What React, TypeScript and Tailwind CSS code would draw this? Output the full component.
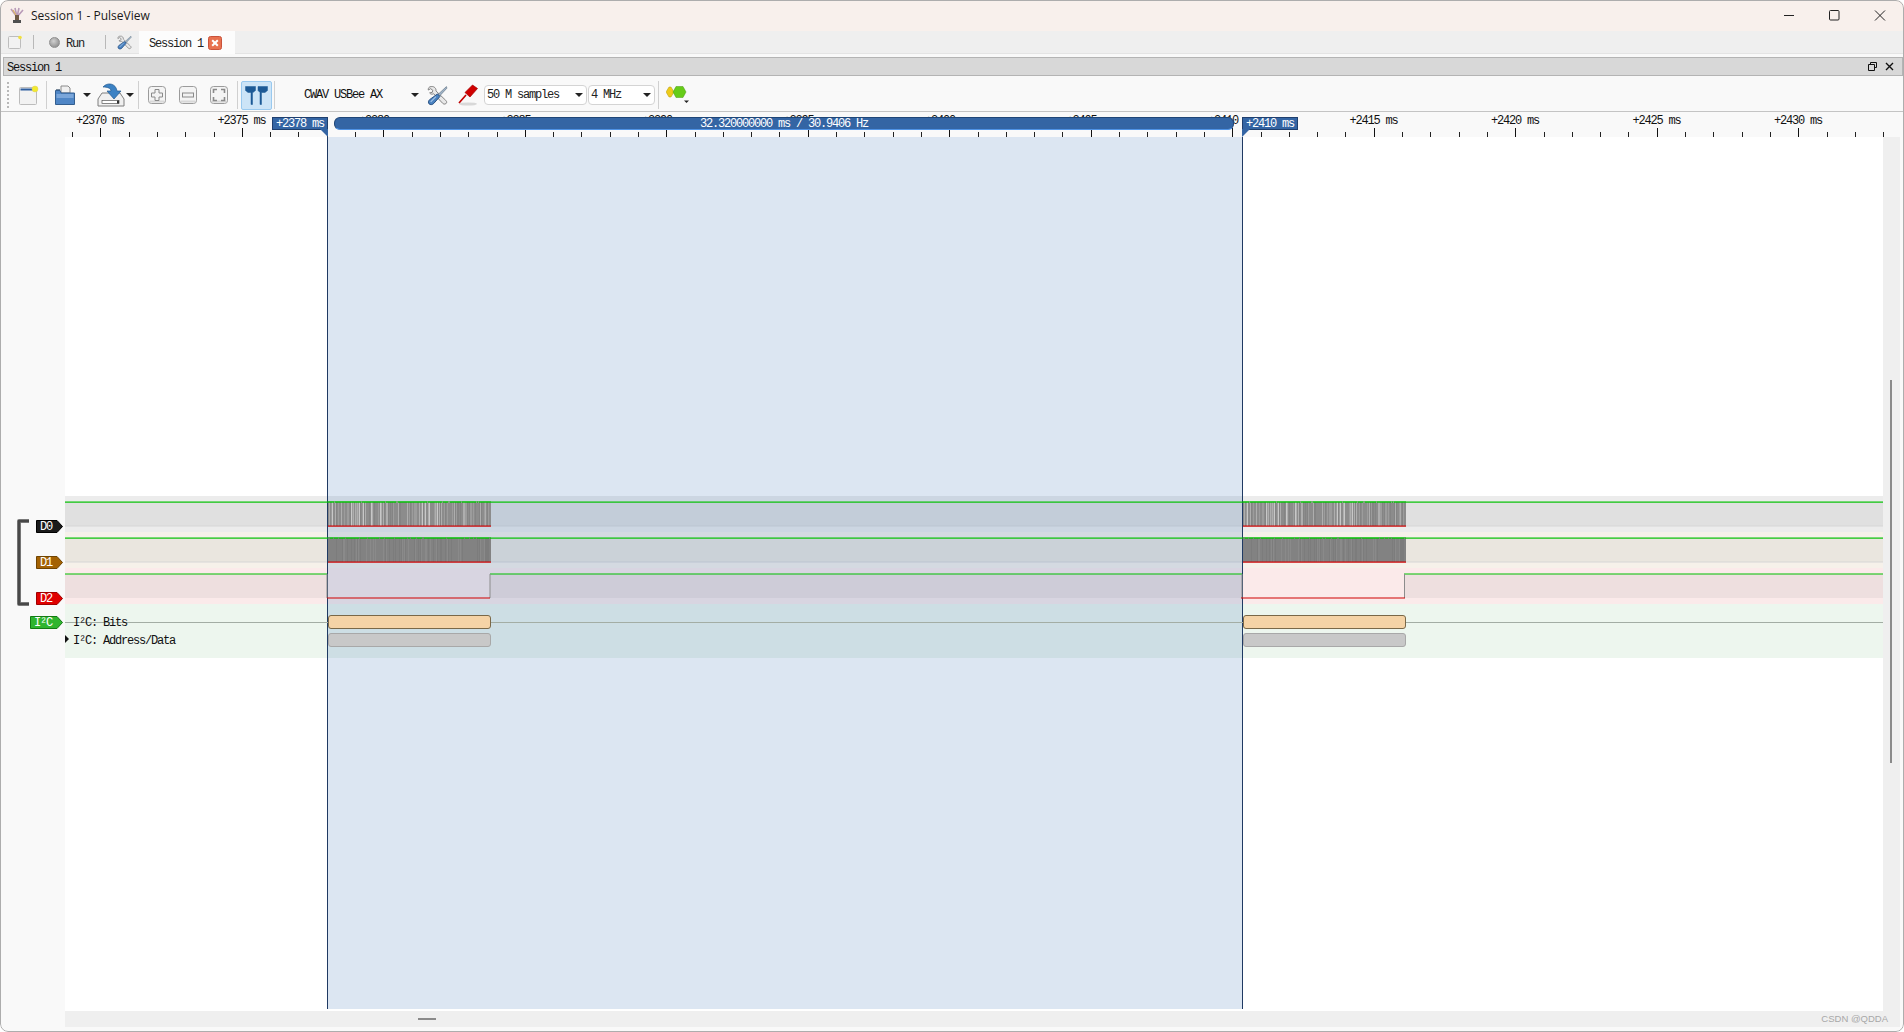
import React from "react";

const mono = "[font-family:'Liberation_Mono',monospace] text-[12px] tracking-[-1.2px] leading-none";

function stripes(seed: number, n: number) {
  const out: number[] = [];
  let s = seed;
  for (let i = 0; i < n; i++) {
    s = (s * 1103515245 + 12345) & 0x7fffffff;
    out.push((s >> 8) % 100);
  }
  return out;
}
const pat0 = stripes(7, 163);
const pat1 = stripes(19, 163);

function Busy({ x, kind }: { x: number; kind: 0 | 1 }) {
  const pat = kind === 0 ? pat0 : pat1;
  return (
    <g>
      <rect x={x} y={6} width={163} height={24} fill={kind === 0 ? "#8c8c8c" : "#828282"} />
      {pat.map((v, i) => {
        if (kind === 0) {
          if (v > 55) return null;
          const c = v < 6 ? "#c8c8c8" : v < 20 ? "#aeaeae" : v < 40 ? "#9c9c9c" : "#848484";
          return <rect key={i} x={x + i} y={6} width={1} height={24} fill={c} />;
        }
        if (v > 30) return null;
        return <rect key={i} x={x + i} y={6} width={1} height={24} fill={v < 12 ? "#8a8a8a" : "#7c7c7c"} />;
      })}
      <rect x={x} y={5.5} width={163} height={1.2} fill="#00c000" />
      <rect x={x} y={29.5} width={163} height={1.2} fill="#d00000" />
      {pat.map((v, i) =>
        v > 90 ? <rect key={i} x={x + i} y={5.5} width={1} height={1.2} fill={kind === 0 ? "#a0a0a0" : "#808080"} /> : null
      )}
    </g>
  );
}

function LogicBg({ outer, inner, low }: { outer: string; inner: string; low?: boolean }) {
  const W = 1818;
  return (
    <svg className="block h-[36px] w-[1818px] shrink-0" viewBox={`0 0 ${W} 36`}>
      <rect width={W} height={36} fill={outer} />
      {low ? (
        <g>
          <rect y={6} width={262} height={24} fill={inner} />
          <rect x={425} y={6} width={753} height={24} fill={inner} />
          <rect x={1340} y={6} width={478} height={24} fill={inner} />
        </g>
      ) : (
        <g>
          <rect y={6} width={W} height={24} fill={inner} />
          <rect y={29.5} width={W} height={1} fill="#d6d6d6" />
        </g>
      )}
    </svg>
  );
}

function LogicTrace({ busy }: { busy?: 0 | 1 }) {
  const W = 1818;
  return (
    <svg className="block h-[36px] w-[1818px] shrink-0" viewBox={`0 0 ${W} 36`}>
      {busy !== undefined ? (
        <g>
          <rect y={5.5} width={W} height={1.2} fill="#00c000" />
          <Busy x={263} kind={busy} />
          <Busy x={1178} kind={busy} />
        </g>
      ) : (
        <g>
          <path d="M0 6H262M425 6H1177M1339 6H1818" stroke="#00c000" strokeWidth={1.2} fill="none" />
          <path d="M262 6V30M425 6V30M1177 6V30M1339.5 6V30" stroke="#8c8c8c" strokeWidth={1} fill="none" />
          <path d="M262 30H425M1176 30H1340" stroke="#d00000" strokeWidth={1.2} fill="none" />
        </g>
      )}
    </svg>
  );
}

function Pill({ left, top, kind }: { left: number; top: number; kind: "o" | "g" }) {
  return (
    <div
      className={
        kind === "o"
          ? "absolute h-[14px] w-[163px] rounded-[3px] border border-[#7a6848] bg-[#f5d3a6]"
          : "absolute h-[14px] w-[163px] rounded-[3px] border border-[#a8a8a8] bg-[#c8c8c8]"
      }
      style={{ left, top }}
    />
  );
}

function Tag({ text, fill, stroke, wide }: { text: string; fill: string; stroke: string; wide?: boolean }) {
  const w = wide ? 33 : 27;
  return (
    <div className="relative flex h-[13px] items-center justify-start" style={{ width: w }}>
      <svg className="absolute inset-0" width={w} height={13} viewBox={`0 0 ${w} 13`}>
        <path d={`M0.5 0.5H${w - 6}L${w - 0.5} 6.5L${w - 6} 12.5H0.5Z`} fill={fill} stroke={stroke} />
      </svg>
      <span className={`${mono} relative pl-[4px] text-white`}>{text}</span>
    </div>
  );
}

function ToolIcon({ size = 20 }: { size?: number }) {
  return (
    <svg width={size} height={size} viewBox="0 0 20 20" className="shrink-0">
      <path d="M4 1.5C2 1.5 1 3 1.2 4.8L3.5 3.5L5.5 5L5 7L2.5 7.5C3.5 9 5.3 9 6.3 8.3L15 17.5C16 18.5 18 18.5 18.6 17C19 16 18.5 15.2 17.8 14.6L8.5 5.6C9 3.5 7 1 4 1.5Z" fill="#e8e8e8" stroke="#7d7d7d" strokeWidth={0.9} />
      <path d="M18.5 1.5L19 3L12 10.5L10.5 9Z" fill="#9fb4c8" stroke="#5f6f7f" strokeWidth={0.6} />
      <path d="M10 8.5L12.3 11L6.5 17.5C5.2 19 3 19 2 18C1 17 1.2 15.2 2.4 14Z" fill="#4a82c0" stroke="#274f80" strokeWidth={0.9} />
      <path d="M3.5 16L8.5 11" stroke="#a9c9ea" strokeWidth={1} />
    </svg>
  );
}

function SmallArrow() {
  return (
    <svg width={8} height={4} viewBox="0 0 8 4" className="shrink-0">
      <path d="M0 0H8L4 4Z" fill="#222" />
    </svg>
  );
}

function Sep() {
  return <div className="h-[28px] w-px shrink-0 bg-[#d0d0d0]" />;
}

function ZoomBtn({ kind }: { kind: "plus" | "minus" | "fit" }) {
  return (
    <svg width={18} height={18} viewBox="0 0 18 18" className="shrink-0">
      <rect x={0.5} y={0.5} width={17} height={17} rx={3} fill="#f4f4f4" stroke="#9b9b9b" />
      <rect x={1.5} y={14.5} width={15} height={2} fill="#d8d8d8" />
      {kind === "plus" && <path d="M7 3.5H11V7H14.5V11H11V14.5H7V11H3.5V7H7Z" fill="#f2f2f2" stroke="#8a8a8a" />}
      {kind === "minus" && <rect x={3.5} y={7} width={11} height={4} fill="#f2f2f2" stroke="#8a8a8a" />}
      {kind === "fit" && (
        <path d="M3.5 7V3.5H7M11 3.5H14.5V7M14.5 11V14.5H11M7 14.5H3.5V11" fill="none" stroke="#8a8a8a" strokeWidth={1.6} />
      )}
    </svg>
  );
}

function Combo({ text, width }: { text: string; width: number }) {
  return (
    <div
      className="flex h-[20px] shrink-0 items-center justify-between rounded-[4px] border border-[#d4d4d4] bg-white pl-[2px] pr-[3px]"
      style={{ width }}
    >
      <span className={`${mono} text-[#222]`}>{text}</span>
      <SmallArrow />
    </div>
  );
}

function Flag({ left, text, side }: { left: number; text: string; side: "left" | "right" }) {
  return (
    <>
      <div className="absolute top-[5px] flex h-[13px] w-[56px] items-center justify-center border border-[#1f3f6e] bg-[#3465a4]" style={{ left }}>
        <span className={`${mono} text-white`}>{text}</span>
      </div>
      <svg className="absolute top-[17px]" width={8} height={8} viewBox="0 0 8 8" style={{ left: side === "right" ? left + 48 : left }}>
        {side === "right" ? <path d="M0 0H8V8Z" fill="#3465a4" /> : <path d="M0 0H8L0 8Z" fill="#3465a4" />}
      </svg>
    </>
  );
}

function Ruler() {
  const minors: number[] = [];
  for (let x = 72; x < 1884; x += 28.3) minors.push(x);
  const labels: number[] = [];
  for (let k = 0; k <= 12; k++) labels.push(k);
  return (
    <div className="relative h-[25px] w-full shrink-0 bg-[#f9f9f9]">
      <svg className="absolute inset-0" width={1904} height={25} viewBox="0 0 1904 25">
        {minors.map((x) => (
          <line key={x} x1={Math.round(x) + 0.5} x2={Math.round(x) + 0.5} y1={20} y2={25} stroke="#222" />
        ))}
        {labels.map((k) => {
          const x = 100 + 141.5 * k;
          return (
            <g key={k}>
              <line x1={Math.round(x) + 0.5} x2={Math.round(x) + 0.5} y1={16} y2={25} stroke="#111" />
              <text
                x={x}
                y={12}
                textAnchor="middle"
                fontFamily="'Liberation Mono', monospace"
                fontSize={12}
                letterSpacing={-1.2}
                fill="#111"
              >
                {`+${2370 + 5 * k} ms`}
              </text>
            </g>
          );
        })}
      </svg>
      <Flag left={272} text="+2378 ms" side="right" />
      <Flag left={1242} text="+2410 ms" side="left" />
      <div className="absolute left-[334px] top-[5px] flex h-[13px] w-[900px] items-center justify-center rounded-[6px] border border-[#1f4677] border-b-[#4f93e6] bg-[#3465a4]">
        <span className={`${mono} text-white`}>32.320000000 ms / 30.9406 Hz</span>
      </div>
    </div>
  );
}

export default function App() {
  return (
    <div className="relative flex h-[1032px] w-[1904px] flex-col overflow-hidden rounded-[8px] bg-[#f9f9f9]">
      {/* title bar */}
      <div className="flex h-[31px] shrink-0 items-center bg-[#f8f0ec]">
        <svg width={16} height={17} viewBox="0 0 16 17" className="ml-[9px] shrink-0">
          <path d="M8 10L2 2M8 10L6 1M8 10L10 1M8 10L14 3" stroke="#b89ab8" strokeWidth={1.6} />
          <path d="M8 10L4 3" stroke="#d9b36a" strokeWidth={1.4} />
          <rect x={6} y={8} width={4} height={5} fill="#6f5a44" />
          <rect x={4} y={13} width={8} height={3} fill="#4f4f4f" />
        </svg>
        <span className="ml-[6px] text-[12px] text-[#1a1a1a] [font-family:'Open_Sans',sans-serif]">Session 1 - PulseView</span>
        <div className="ml-auto flex h-full items-center">
          <svg width={46} height={31} viewBox="0 0 46 31"><path d="M20 15.5H30" stroke="#222" /></svg>
          <svg width={46} height={31} viewBox="0 0 46 31"><rect x={19.5} y={10.5} width={9.5} height={9.5} rx={1} fill="none" stroke="#222" /></svg>
          <svg width={46} height={31} viewBox="0 0 46 31"><path d="M19 10.5L29 20.5M29 10.5L19 20.5" stroke="#222" /></svg>
          <div className="w-[2px]" />
        </div>
      </div>

      {/* tab bar */}
      <div className="flex h-[23px] shrink-0 items-center border-b border-[#e4e4e4] bg-[#efefef]">
        <svg width={14} height={14} viewBox="0 0 14 14" className="ml-[8px] shrink-0">
          <rect x={0.5} y={1.5} width={12} height={12} rx={1} fill="#f2f2f2" stroke="#bdbdbd" />
          <circle cx={12} cy={2.5} r={1.8} fill="#f0e040" />
        </svg>
        <div className="ml-[11px] h-[14px] w-px bg-[#b8b8b8]" />
        <div className="ml-[15px] h-[11px] w-[11px] rounded-full border border-[#8f8f8f] bg-[radial-gradient(circle_at_40%_35%,#d0d0d0,#808080)]" />
        <span className={`${mono} ml-[6px] mt-[3px] text-[#222]`}>Run</span>
        <div className="ml-[21px] h-[14px] w-px bg-[#b8b8b8]" />
        <div className="ml-[11px]"><ToolIcon size={15} /></div>
        <div className="ml-[7px] flex h-[23px] w-[96px] items-center bg-[#fcfcfc] pl-[10px]">
          <span className={`${mono} mt-[3px] text-[#222]`}>Session 1</span>
          <svg width={14} height={14} viewBox="0 0 14 14" className="ml-[5px] mt-px">
            <rect x={0.5} y={0.5} width={13} height={13} rx={2} fill="#e8714f" stroke="#c9523a" />
            <path d="M4.2 4.2L9.8 9.8M9.8 4.2L4.2 9.8" stroke="#fff" strokeWidth={2} />
          </svg>
        </div>
      </div>

      {/* dock title */}
      <div className="mt-[3px] ml-[3px] mr-px flex h-[19px] shrink-0 items-center border border-[#b4b4b4] bg-[#d8d8d8] pl-[3px]">
        <span className={`${mono} mt-[2px] text-[#111]`}>Session 1</span>
        <svg width={9} height={9} viewBox="0 0 9 9" className="ml-auto shrink-0">
          <path d="M2.5 2.5V0.5H8.5V5.5H6.5M0.5 2.5H6.5V8.5H0.5Z" fill="none" stroke="#111" />
        </svg>
        <svg width={9} height={9} viewBox="0 0 9 9" className="ml-[8px] mr-[8px] shrink-0">
          <path d="M1 1L8 8M8 1L1 8" stroke="#111" strokeWidth={1.4} />
        </svg>
      </div>

      {/* toolbar */}
      <div className="flex h-[36px] shrink-0 items-center border-b border-[#c4c4c4] bg-[#f9f9f9] pt-[3px]">
        <div className="ml-[7px] h-[26px] w-[2px] border-l-2 border-dotted border-[#b8b8b8]" />
        <svg width={20} height={20} viewBox="0 0 20 20" className="ml-[10px] shrink-0">
          <rect x={0.5} y={2.5} width={17} height={17} rx={1} fill="#f2f2f2" stroke="#bcbcbc" />
          <rect x={1.5} y={3.5} width={14} height={2} fill="#2f5f9f" />
          <circle cx={16} cy={4} r={3} fill="#f2ea30" stroke="#e0d060" strokeWidth={0.5} />
        </svg>
        <div className="ml-[7px]"><Sep /></div>
        <svg width={20} height={20} viewBox="0 0 20 20" className="ml-[8px] shrink-0">
          <path d="M6 1H13L15 3V8H6Z" fill="#f0f0f0" stroke="#8a8a8a" />
          <path d="M1 4H5V6H1Z" fill="#7a8a9a" />
          <path d="M0.5 5.5H5L6 8H19.5V19.5H0.5Z" fill="#4f86c6" stroke="#345f90" />
          <rect x={1.5} y={9} width={17} height={4} fill="#7aa6da" />
        </svg>
        <div className="ml-[8px]"><SmallArrow /></div>
        <svg width={28} height={24} viewBox="0 0 28 24" className="ml-[6px] shrink-0">
          <path d="M5 10H23L27 16V23H1V16Z" fill="#f0f0f0" stroke="#7f7f7f" />
          <rect x={5} y={17.5} width={17} height={3} fill="#fff" stroke="#555" strokeWidth={0.7} />
          <rect x={20} y={17.5} width={2} height={3} fill="#333" />
          <path d="M6 4C10 -1 19 0 20 8H24L17 16L10 8H14C14 5 10 4 6 4Z" fill="#3c82c4" stroke="#225a90" strokeWidth={0.7} />
        </svg>
        <div className="ml-[1px]"><SmallArrow /></div>
        <div className="ml-[4px]"><Sep /></div>
        <div className="ml-[9px]"><ZoomBtn kind="plus" /></div>
        <div className="ml-[13px]"><ZoomBtn kind="minus" /></div>
        <div className="ml-[13px]"><ZoomBtn kind="fit" /></div>
        <div className="ml-[9px]"><Sep /></div>
        <div className="ml-[3px] flex h-[29px] w-[31px] items-center justify-center rounded-[2px] border border-[#99c9ef] bg-[#cce4f7]">
          <svg width={23} height={19} viewBox="0 0 23 19">
            <path d="M0.5 0.5H10.5V4.5L8 6.5H7.5V18.5H6V6.5H3L0.5 4.5ZM13 0.5H22.5V4.5L20 6.5H16.5V18.5H15V6.5L13 4.5Z" fill="#1d5a96" stroke="#1d5a96" strokeWidth={0.5} />
          </svg>
        </div>
        <div className="ml-[2px]"><Sep /></div>
        <span className={`${mono} ml-[29px] w-[78px] whitespace-nowrap text-[#111]`}>CWAV USBee AX</span>
        <div className="ml-[29px]"><SmallArrow /></div>
        <div className="ml-[8px]"><ToolIcon size={21} /></div>
        <svg width={21} height={22} viewBox="0 0 21 22" className="ml-[10px] shrink-0">
          <ellipse cx={10} cy={20} rx={9} ry={1.6} fill="#d8d8d8" />
          <path d="M1 19L8 11" stroke="#c00000" strokeWidth={1.6} />
          <path d="M7 8.5L14.5 1L19.5 4.5L12 13Z" fill="#d00000" stroke="#a00000" strokeWidth={0.7} />
        </svg>
        <div className="ml-[5px]"><Combo text="50 M samples" width={103} /></div>
        <div className="ml-px"><Combo text="4 MHz" width={67} /></div>
        <div className="ml-[3px]"><Sep /></div>
        <svg width={23} height={18} viewBox="0 0 23 18" className="ml-[7px] shrink-0">
          <path d="M0 6L3 1H5L8 6L5 11H3Z" fill="#eecb1a" stroke="#b59a10" strokeWidth={0.5} />
          <path d="M7 6L10 0.5H17L20 6L17 11.5H10Z" fill="#66cc18" stroke="#4a9a10" strokeWidth={0.5} />
          <path d="M18 14.5H23L20.5 17Z" fill="#222" />
        </svg>
      </div>

      <Ruler />

      {/* main */}
      <div className="flex min-h-0 flex-1">
        {/* label column */}
        <div className="relative flex w-[65px] shrink-0 flex-col bg-[#f9f9f9]">
          <div className="h-[359px] shrink-0" />
          <div className="flex h-[36px] items-end justify-end"><div className="relative top-px mr-[2px]"><Tag text="D0" fill="#1a1a1a" stroke="#000" /></div></div>
          <div className="flex h-[36px] items-end justify-end"><div className="relative top-px mr-[2px]"><Tag text="D1" fill="#a46203" stroke="#6f4402" /></div></div>
          <div className="flex h-[36px] items-end justify-end"><div className="relative top-px mr-[2px]"><Tag text="D2" fill="#e00000" stroke="#a00000" /></div></div>
          <div className="flex justify-end pt-[12px]"><div className="mr-[2px]"><Tag text="I²C" fill="#2fb52f" stroke="#137a13" wide /></div></div>
          <svg className="absolute left-[16px] top-[382px]" width={15} height={87} viewBox="0 0 15 87">
            <path d="M13 2H3V85H13" fill="none" stroke="#8a8a8a" strokeWidth={4} strokeLinejoin="round" />
            <path d="M13 2H3V85H13" fill="none" stroke="#484848" strokeWidth={2.6} strokeLinejoin="round" />
          </svg>
        </div>

        {/* centre */}
        <div className="flex w-[1835px] shrink-0 flex-col">
          <div className="flex h-[874px] shrink-0">
            <div className="relative h-full w-[1818px] shrink-0 overflow-hidden bg-white">
              {/* row backgrounds */}
              <div className="h-[359px]" />
              <LogicBg outer="#ececec" inner="#e0e0e0" />
              <LogicBg outer="#f6f1ea" inner="#eae6df" />
              <LogicBg outer="#fbeaea" inner="#eedfdf" low />
              <div className="h-[54px] w-full bg-[#edf6ee]" />
              {/* selection */}
              <div className="absolute bottom-[2px] left-[262px] top-0 w-[916px] border-x border-x-[#1f3a63] bg-[rgba(78,130,190,0.2)]" />
              {/* traces, drawn over the selection */}
              <div className="absolute inset-0 flex flex-col">
                <div className="h-[359px] shrink-0" />
                <LogicTrace busy={0} />
                <LogicTrace busy={1} />
                <LogicTrace />
                <div className="relative h-[54px] w-full shrink-0">
                  <div className="absolute left-0 top-[18px] h-px w-full bg-[#a3ada4]" />
                  <Pill left={263} top={11} kind="o" />
                  <Pill left={263} top={29} kind="g" />
                  <Pill left={1178} top={11} kind="o" />
                  <Pill left={1178} top={29} kind="g" />
                  <span className={`${mono} absolute left-[8px] top-[13px] text-[#111]`}>I²C: Bits</span>
                  <svg className="absolute left-0 top-[31px]" width={4} height={8} viewBox="0 0 4 8"><path d="M0 0L4 4L0 8Z" fill="#111" /></svg>
                  <span className={`${mono} absolute left-[8px] top-[31px] text-[#111]`}>I²C: Address/Data</span>
                </div>
              </div>
            </div>
            <div className="relative w-[17px] shrink-0 bg-[#efefef]">
              <div className="absolute left-[7px] top-[243px] h-[383px] w-[2px] bg-[#8a8a8a]" />
            </div>
          </div>
          <div className="relative h-[16px] shrink-0 bg-[#efefef]">
            <div className="absolute left-[353px] top-[7px] h-[2px] w-[18px] bg-[#8a8a8a]" />
            <span className="absolute right-[12px] top-[1px] text-[9.5px] leading-[14px] text-[#a8a8a8] [font-family:'Liberation_Sans',sans-serif]">CSDN @QDDA</span>
          </div>
        </div>
        <div className="w-[4px] shrink-0 bg-[#f9f9f9]" />
      </div>

      <div className="pointer-events-none absolute inset-0 rounded-[8px] border border-[#adadad]" />
    </div>
  );
}
